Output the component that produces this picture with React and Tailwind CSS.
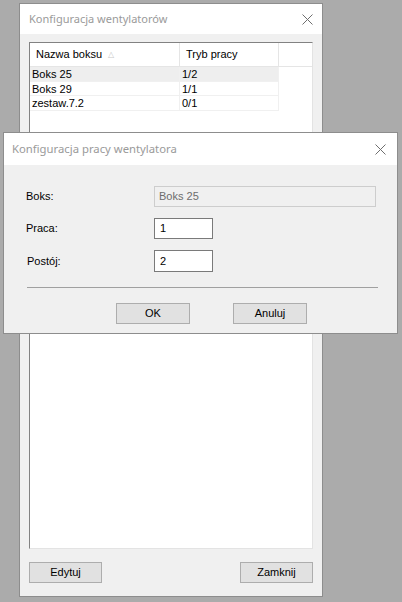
const ui = { fontFamily: '"Liberation Sans", Arial, sans-serif' }
const title = { fontFamily: '"Noto Sans", "Open Sans", sans-serif' }

const rows = [
  { name: 'Boks 25', mode: '1/2', selected: true },
  { name: 'Boks 29', mode: '1/1' },
  { name: 'zestaw.7.2', mode: '0/1' },
]

function CloseIcon() {
  return (
    <svg width="11" height="11" viewBox="0 0 11 11" className="text-[#6e6e6e]">
      <path d="M0.5 0.5 L10.5 10.5 M10.5 0.5 L0.5 10.5" stroke="currentColor" strokeWidth="1" fill="none" />
    </svg>
  )
}

function Button({ children, className = '' }) {
  return (
    <button
      className={`h-[21px] bg-[#e1e1e1] border border-[#adadad] text-[11px] text-black flex items-center justify-center ${className}`}
      style={ui}
    >
      {children}
    </button>
  )
}

export default function App() {
  return (
    <div className="relative w-[402px] h-[602px] bg-[#ababab] overflow-hidden pt-[3px] pl-[19px]" style={ui}>
      {/* main window */}
      <div className="w-[304px] h-[594px] border border-[#8d8d8d] bg-[#f0f0f0] flex flex-col">
        <div className="h-[30px] bg-white flex items-center justify-between pl-[9px] pr-[9px]">
          <span className="text-[11px] text-[#9a9a9a]" style={title}>Konfiguracja wentylatorów</span>
          <CloseIcon />
        </div>
        <div className="flex-1 flex flex-col px-[9px] pt-[8px] pb-[12px]">
          <div className="h-[507px] bg-white border-t border-l border-t-[#828282] border-l-[#828282] border-r border-b border-r-[#e3e3e3] border-b-[#e3e3e3] text-[11px] text-black">
            <div className="flex h-[24px] border-b border-[#e5e5e5]">
              <div className="w-[150px] flex items-center pl-[6px] border-r border-[#e5e5e5]">
                Nazwa boksu
                <span className="ml-[6px] text-[8px] text-[#c8c8c8] leading-none">△</span>
              </div>
              <div className="w-[99px] flex items-center pl-[6px] border-r border-[#e5e5e5]">Tryb pracy</div>
            </div>
            {rows.map((r) => (
              <div
                key={r.name}
                className={`flex w-[249px] h-[14.5px] leading-[14px] border-b border-[#f0f0f0] ${r.selected ? 'bg-[#eeeeee]' : 'bg-white'}`}
              >
                <div className="w-[150px] pl-[2px] border-r border-[#f0f0f0]">{r.name}</div>
                <div className="w-[99px] pl-[2px] border-r border-[#f0f0f0]">{r.mode}</div>
              </div>
            ))}
          </div>
          <div className="mt-[13px] flex justify-between">
            <Button className="w-[73px]">Edytuj</Button>
            <Button className="w-[73px]">Zamknij</Button>
          </div>
        </div>
      </div>

      {/* modal dialog over the window */}
      <div className="absolute left-[3px] top-[132px] w-[395px] h-[202px] border border-[#8d8d8d] bg-[#f0f0f0] flex flex-col">
        <div className="h-[32px] bg-white flex items-center justify-between pl-[8px] pr-[11px]">
          <span className="text-[11.3px] text-[#9a9a9a]" style={title}>Konfiguracja pracy wentylatora</span>
          <CloseIcon />
        </div>
        <div className="flex-1 pl-[22px] pr-[9px] pt-[21px] text-[11px] text-black">
          <div className="flex items-center h-[21px]">
            <span className="w-[128px]">Boks:</span>
            <div className="w-[222px] h-[21px] bg-[#f0f0f0] border border-[#cdcdcd] flex items-center pl-[4px] text-[#6d6d6d]">Boks 25</div>
          </div>
          <div className="flex items-center h-[21px] mt-[11px]">
            <span className="w-[128px]">Praca:</span>
            <div className="w-[59px] h-[21px] bg-white border border-[#7a7a7a] flex items-center pl-[5px]">1</div>
          </div>
          <div className="flex items-center h-[22px] mt-[11px]">
            <span className="w-[128px] pl-[1px]">Postój:</span>
            <div className="w-[59px] h-[22px] bg-white border border-[#7a7a7a] flex items-center pl-[5px]">2</div>
          </div>
          <div className="mt-[15px] mr-[10px] ml-[1px] h-[1px] bg-[#a0a0a0]" />
          <div className="mt-[15px] flex gap-[43px] pl-[90px]">
            <Button className="w-[74px]">OK</Button>
            <Button className="w-[74px]">Anuluj</Button>
          </div>
        </div>
      </div>
    </div>
  )
}
